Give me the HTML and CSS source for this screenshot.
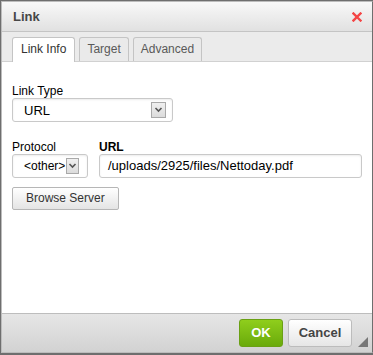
FILE: index.html
```html
<!DOCTYPE html>
<html>
<head>
<meta charset="utf-8">
<link rel="stylesheet" href="styles.css">
</head>
<body>
<div class="dialog">
  <div class="title">
    <span class="title-text">Link</span>
    <svg class="close" width="10" height="10" viewBox="0 0 10 10"><path d="M1.5 1.5 L8.5 8.5 M8.5 1.5 L1.5 8.5" stroke="#f44545" stroke-width="2.4" stroke-linecap="square"/></svg>
  </div>
  <div class="tabs">
    <div class="tab active">Link Info</div>
    <div class="tab">Target</div>
    <div class="tab">Advanced</div>
  </div>
  <div class="content">
    <div class="field">
      <div class="label">Link Type</div>
      <div class="select wide"><span class="val">URL</span><span class="arrow"><svg width="9" height="6" viewBox="0 0 9 6"><path d="M1.5 1 L4.5 4 L7.5 1" fill="none" stroke="#555" stroke-width="1.6"/></svg></span></div>
    </div>
    <div class="row">
      <div class="field fixed">
        <div class="label">Protocol</div>
        <div class="select small"><span class="val">&lt;other&gt;</span><span class="arrow"><svg width="9" height="6" viewBox="0 0 9 6"><path d="M1.5 1 L4.5 4 L7.5 1" fill="none" stroke="#555" stroke-width="1.6"/></svg></span></div>
      </div>
      <div class="field grow">
        <div class="label bold">URL</div>
        <div class="input">/uploads/2925/files/Nettoday.pdf</div>
      </div>
    </div>
    <div class="button">Browse Server</div>
  </div>
  <div class="footer">
    <div class="btn ok">OK</div>
    <div class="btn cancel">Cancel</div>
    <span class="resize"></span>
  </div>
</div>
</body>
</html>
```

FILE: styles.css
```css
html, body {
  margin: 0;
  padding: 0;
}
body {
  width: 373px;
  height: 355px;
  overflow: hidden;
  background: #6e6e6e;
  font-family: "Liberation Sans", Arial, sans-serif;
  font-size: 12px;
  color: #000;
}
.dialog {
  width: 370px;
  height: 350px;
  margin: 1px 0 0 1px;
  border: 1px solid #bcbcbc;
  border-right-color: #6e6e6e;
  display: flex;
  flex-direction: column;
  background: #fff;
}
.title {
  height: 29px;
  border-bottom: 1px solid #c4c4c4;
  background: linear-gradient(#f8f8f8, #e1e1e1);
  display: flex;
  align-items: center;
  justify-content: space-between;
  padding: 0 10px 0 11px;
}
.title-text {
  font-weight: bold;
  font-size: 13px;
  color: #474747;
}
.tabs {
  height: 29px;
  background: #ebebeb;
  border-bottom: 1px solid #d1d1d1;
  display: flex;
  align-items: flex-end;
  gap: 4px;
  padding-left: 10px;
}
.tab {
  height: 23px;
  line-height: 23px;
  padding: 0 7px;
  border: 1px solid #c4c4c4;
  border-bottom: none;
  border-radius: 3px 3px 0 0;
  background: #eaeaea;
  color: #595959;
  font-size: 12px;
}
.tab.active {
  background: #fff;
  color: #333;
  height: 24px;
  margin-bottom: -1px;
  padding: 0 8px;
}
.content {
  flex: 1;
  padding: 22px 10px 0 10px;
  display: flex;
  flex-direction: column;
  align-items: flex-start;
}
.field { display: flex; flex-direction: column; }
.fixed { flex: none; }
.label {
  font-size: 12px;
  color: #000;
  line-height: 14px;
}
.label.bold { font-weight: bold; }
.select {
  height: 22px;
  border: 1px solid #c9c9c9;
  border-radius: 3px;
  box-shadow: inset 0 1px 2px rgba(0,0,0,0.08);
  display: flex;
  align-items: center;
  justify-content: space-between;
  background: #fff;
  font-size: 13px;
}
.select.wide { width: 159px; }
.select.wide .val { padding-left: 11px; }
.select.wide .arrow { margin-right: 6px; }
.select.small { width: 74px; justify-content: flex-start; }
.select.small .val { padding-left: 11px; font-size: 12px; white-space: nowrap; }
.select.small .arrow { margin-left: 1px; width: 11px; flex: none; }
.arrow {
  width: 13px;
  height: 14px;
  border: 1px solid #a9a9a9;
  background: linear-gradient(#f0f0f0, #dcdcdc);
  display: flex;
  align-items: center;
  justify-content: center;
}
.row {
  display: flex;
  gap: 11px;
  margin-top: 18px;
  width: 100%;
}
.grow { flex: 1; min-width: 0; }
.input {
  height: 22px;
  line-height: 22px;
  border: 1px solid #c9c9c9;
  border-radius: 3px;
  box-shadow: inset 0 1px 2px rgba(0,0,0,0.08);
  padding-left: 8px;
  font-size: 13px;
  color: #000;
}
.button {
  margin-top: 9px;
  height: 21px;
  line-height: 21px;
  padding: 0 13px;
  border: 1px solid #b6b6b6;
  border-radius: 2px;
  background: linear-gradient(#fff, #e4e4e4);
  font-size: 12px;
  color: #333;
}
.footer {
  height: 38px;
  border-top: 1px solid #bdbdbd;
  background: linear-gradient(#e6e6e6, #d2d2d2);
  display: flex;
  align-items: center;
  justify-content: flex-end;
  gap: 5px;
  padding-right: 20px;
  position: relative;
}
.btn {
  height: 26px;
  line-height: 26px;
  border-radius: 3px;
  font-size: 13px;
  font-weight: bold;
  text-align: center;
}
.ok {
  width: 42px;
  background: linear-gradient(#8fce1c, #6aaa0b);
  border: 1px solid #6aa014;
  color: #fff;
}
.cancel {
  width: 62px;
  background: linear-gradient(#fff, #e6e6e6);
  border: 1px solid #bcbcbc;
  color: #444;
}
.resize {
  position: absolute;
  right: 4px;
  bottom: 5px;
  width: 0;
  height: 0;
  border-left: 10px solid transparent;
  border-bottom: 10px solid #777;
}
```
